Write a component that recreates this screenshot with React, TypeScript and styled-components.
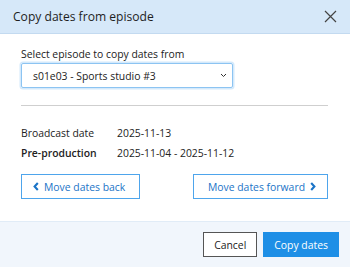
import styled, { createGlobalStyle } from "styled-components";

const GlobalStyle = createGlobalStyle`
  html, body {
    margin: 0;
    padding: 0;
    background: #ffffff;
  }
  body {
    font-family: "Open Sans", "Noto Sans", sans-serif;
    color: #222;
  }
`;

const Dialog = styled.div`
  width: 350px;
  height: 267px;
  display: flex;
  flex-direction: column;
  background: white;
  overflow: hidden;
`;

const Header = styled.div`
  height: 33px;
  flex-shrink: 0;
  display: flex;
  align-items: center;
  justify-content: space-between;
  padding: 0 12px 0 13px;
  background: #d6e8f9;
  border-bottom: 1px solid #c3daf0;

  h1 {
    margin: 0;
    font-size: 12.1px;
    font-weight: 400;
    color: #1e1e1e;
  }
`;

const CloseButton = styled.button`
  border: none;
  background: none;
  padding: 0;
  width: 16px;
  height: 16px;
  display: flex;
  align-items: center;
  justify-content: center;
  color: #444;
`;

const Body = styled.div`
  flex: 1;
  padding: 13px 22px 0 21px;
  font-size: 10.4px;
`;

const Label = styled.label`
  display: block;
  line-height: 14px;
  color: #222;
  margin-bottom: 2px;
`;

const SelectBox = styled.div`
  width: 212px;
  height: 25px;
  box-sizing: border-box;
  border: 1px solid #8cc4f2;
  border-radius: 2px;
  box-shadow: 0 0 0 1.5px #d4e9fb;
  display: flex;
  align-items: center;
  justify-content: space-between;
  padding: 0 5px 0 11px;
  color: #222;
`;

const Divider = styled.hr`
  border: none;
  border-top: 1px solid #cfcfcf;
  margin: 17px 0 0;
`;

const Info = styled.div`
  display: grid;
  grid-template-columns: 96px 1fr;
  row-gap: 4px;
  margin-top: 19px;
  line-height: 16px;
`;

const Term = styled.span<{ $bold?: boolean }>`
  font-weight: ${(p) => (p.$bold ? 600 : 400)};
  color: #222;
`;

const Actions = styled.div`
  display: flex;
  justify-content: space-between;
  margin-top: 13px;
`;

const OutlineButton = styled.button<{ $side: "left" | "right" }>`
  height: 25px;
  box-sizing: border-box;
  border: 1px solid #4ea5ec;
  background: white;
  color: #1b74c7;
  font-family: inherit;
  font-size: 10.4px;
  padding: ${(p) => (p.$side === "left" ? "0 14px 0 11px" : "0 11px 0 14px")};
  display: flex;
  align-items: center;
  gap: 5px;
`;

const Footer = styled.div`
  height: 45px;
  flex-shrink: 0;
  display: flex;
  align-items: center;
  justify-content: flex-end;
  gap: 6px;
  padding: 0 11px 0 0;
  background: #f1f6fc;
  border-top: 1px solid #e1ecf7;
`;

const FooterButton = styled.button<{ $primary?: boolean }>`
  height: 25px;
  box-sizing: border-box;
  font-family: inherit;
  font-size: 10.4px;
  padding: 0 10px;
  border: 1px solid ${(p) => (p.$primary ? "#1e8fe6" : "#555")};
  background: ${(p) => (p.$primary ? "#1e8fe6" : "white")};
  color: ${(p) => (p.$primary ? "white" : "#222")};
`;

const Chevron = ({ dir }: { dir: "left" | "right" | "down" }) => {
  if (dir === "down") {
    return (
      <svg width="7" height="5" viewBox="0 0 7 5">
        <path d="M1 1l2.5 2.5L6 1" fill="none" stroke="#333" strokeWidth="1" />
      </svg>
    );
  }
  return (
    <svg width="6" height="9" viewBox="0 0 6 9">
      <path
        d={dir === "left" ? "M4.8 1L1.6 4.5 4.8 8" : "M1.2 1l3.2 3.5L1.2 8"}
        fill="none"
        stroke="#1b74c7"
        strokeWidth="2.1"
      />
    </svg>
  );
};

export default function App() {
  return (
    <>
      <GlobalStyle />
      <Dialog>
        <Header>
          <h1>Copy dates from episode</h1>
          <CloseButton>
            <svg width="13" height="13" viewBox="0 0 13 13">
              <path d="M1 1l11 11M12 1L1 12" stroke="#444" strokeWidth="1.2" />
            </svg>
          </CloseButton>
        </Header>

        <Body>
          <Label>Select episode to copy dates from</Label>
          <SelectBox>
            <span>s01e03 - Sports studio #3</span>
            <Chevron dir="down" />
          </SelectBox>

          <Divider />

          <Info>
            <Term>Broadcast date</Term>
            <span>2025-11-13</span>
            <Term $bold>Pre-production</Term>
            <span>2025-11-04 - 2025-11-12</span>
          </Info>

          <Actions>
            <OutlineButton $side="left">
              <Chevron dir="left" />
              Move dates back
            </OutlineButton>
            <OutlineButton $side="right">
              Move dates forward
              <Chevron dir="right" />
            </OutlineButton>
          </Actions>
        </Body>

        <Footer>
          <FooterButton>Cancel</FooterButton>
          <FooterButton $primary>Copy dates</FooterButton>
        </Footer>
      </Dialog>
    </>
  );
}
